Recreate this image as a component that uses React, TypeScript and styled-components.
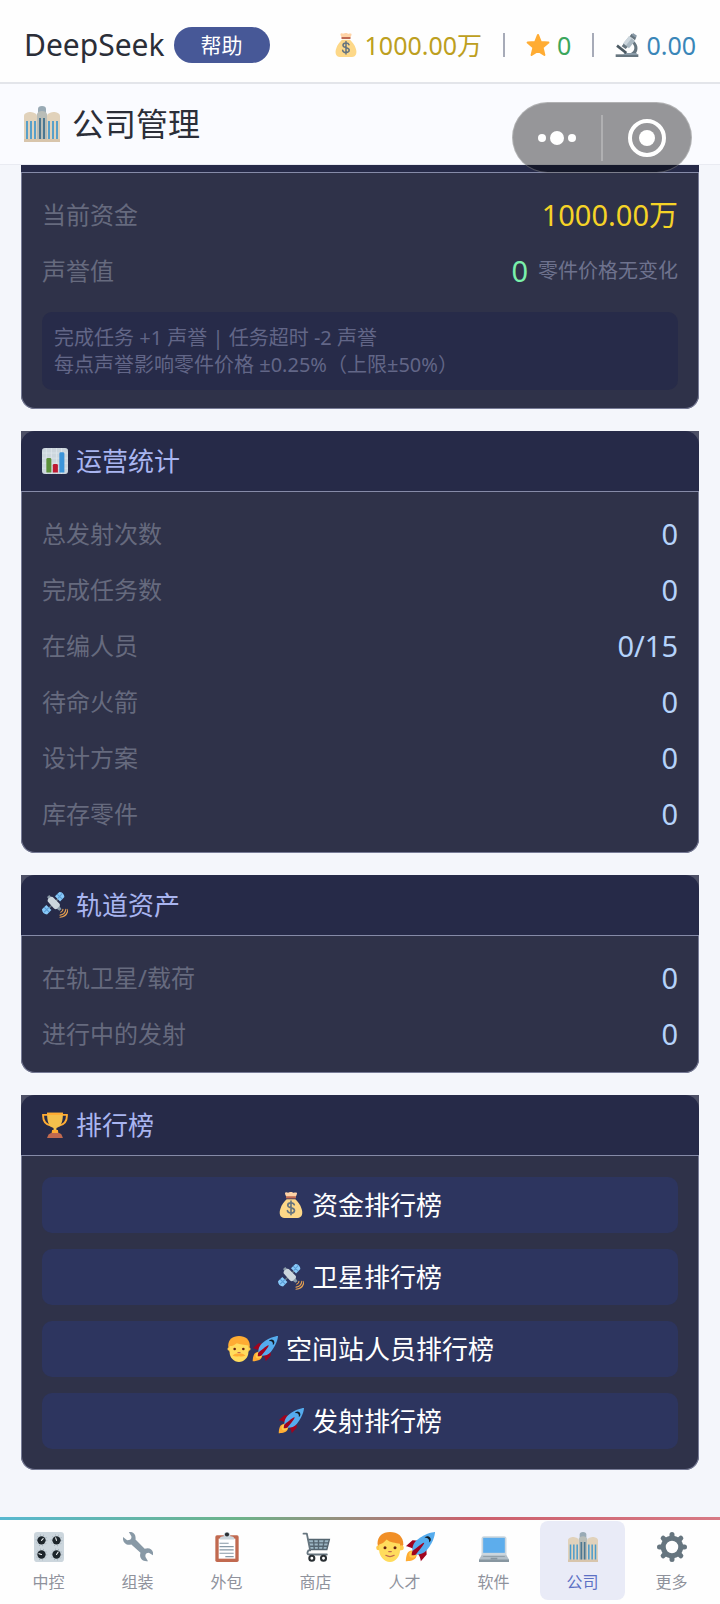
import { useState } from 'react';
import type { ReactNode } from 'react';
import styled, { createGlobalStyle } from 'styled-components';

const GlobalStyle = createGlobalStyle`
  * {
    box-sizing: border-box;
  }

  body {
    margin: 0;
    background: #f4f6fb;
    font-family: 'Noto Sans', 'Noto Sans CJK SC', sans-serif;
    color: #2b2e38;
  }

  button {
    border: 0;
    padding: 0;
    background: none;
    font-family: inherit;
    cursor: pointer;
  }
`;

const Page = styled.div`
  position: relative;
  display: flex;
  flex-direction: column;
  min-height: 100vh;
`;

const TopBar = styled.header`
  display: flex;
  align-items: center;
  justify-content: space-between;
  height: 84px;
  padding: 8px 24px 0;
  background: #fefefe;
  border-bottom: 2px solid #e3e5ea;
`;

const Brand = styled.div`
  display: flex;
  align-items: center;
  gap: 9px;
`;

const BrandName = styled.span`
  font-size: 30px;
  line-height: 36px;
`;

const HelpButton = styled.button`
  width: 96px;
  height: 36px;
  border-radius: 18px;
  background: #475897;
  color: #fff;
  font-size: 21px;
  line-height: 36px;
`;

const Resources = styled.div`
  display: flex;
  align-items: center;
  gap: 21px;
`;

const Resource = styled.span<{ $color: string }>`
  display: flex;
  align-items: center;
  gap: 7px;
  color: ${({ $color }) => $color};
  font-size: 25px;
  line-height: 36px;
`;

const Divider = styled.span`
  width: 2px;
  height: 24px;
  background: #a7abb8;
`;

const TitleBar = styled.div`
  display: flex;
  align-items: center;
  gap: 12px;
  height: 81px;
  padding: 0 24px;
  background: #fafbff;
  border-bottom: 1px solid #e9ebf2;
`;

const PageTitle = styled.h1`
  margin: 0;
  font-size: 32px;
  font-weight: 400;
  line-height: 40px;
`;

const Capsule = styled.div`
  position: absolute;
  top: 102px;
  right: 28px;
  display: flex;
  align-items: center;
  width: 180px;
  height: 71px;
  border: 1px solid rgba(255, 255, 255, 0.25);
  border-radius: 36px;
  background: rgba(0, 0, 0, 0.4);
`;

const CapsuleButton = styled.button`
  display: flex;
  flex: 1;
  align-items: center;
  justify-content: center;
  height: 46px;

  & + & {
    border-left: 2px solid rgba(255, 255, 255, 0.25);
  }
`;

const Content = styled.main`
  display: flex;
  flex-direction: column;
  gap: 22px;
  padding: 0 21px 47px;
`;

const CardBox = styled.section`
  border-radius: 0 0 14px 14px;
  background: #4d5066;
`;

const CardHeader = styled.div<{ $scrolled?: boolean }>`
  display: flex;
  align-items: center;
  gap: 8px;
  height: ${({ $scrolled }) => ($scrolled ? '8px' : '61px')};
  padding: 0 21px;
  border-bottom: 1px solid #868ba8;
  border-radius: ${({ $scrolled }) => ($scrolled ? '0' : '14px 14px 0 0')};
  background: #262a48;
`;

const CardTitle = styled.h2`
  margin: 0;
  color: #a9b5f0;
  font-size: 26px;
  font-weight: 400;
  line-height: 36px;
`;

const CardBody = styled.div`
  padding: 14px 20px 10px;
  border: 1px solid #777b96;
  border-top: 0;
  border-radius: 0 0 14px 14px;
  background: #2f3249;
`;

const StatList = styled.dl`
  margin: 0;
`;

const StatRow = styled.div`
  display: flex;
  align-items: center;
  justify-content: space-between;
  height: 56px;
`;

const StatLabel = styled.dt`
  color: #666a7e;
  font-size: 24px;
  line-height: 36px;
`;

const StatValue = styled.dd<{ $color?: string }>`
  display: flex;
  align-items: center;
  gap: 10px;
  margin: 0;
  color: ${({ $color }) => $color || '#b5d3fb'};
  font-size: 29px;
  line-height: 36px;
`;

const StatHint = styled.span`
  color: #6e728e;
  font-size: 20px;
`;

const Note = styled.p`
  margin: 13px 0 8px;
  padding: 12px;
  border-radius: 10px;
  background: #272b49;
  color: #626687;
  font-size: 20px;
  line-height: 27px;
`;

const RankList = styled.div`
  display: flex;
  flex-direction: column;
  gap: 16px;
  padding: 7px 0 10px;
`;

const RankButton = styled.button`
  display: flex;
  align-items: center;
  justify-content: center;
  gap: 8px;
  height: 56px;
  border-radius: 10px;
  background: #2d355f;
  color: #fff;
  font-size: 26px;
  line-height: 36px;
`;

const IconGroup = styled.span`
  display: flex;
`;

const TabBar = styled.nav`
  display: flex;
  margin-top: auto;
  padding: 1px 4px 4px;
  border-top: 3px solid;
  border-image: linear-gradient(90deg, #58b8d0, #6cb38a 33%, #cc5f6c 66%, #d77a85) 1;
  background: #fefefe;
`;

const Tab = styled.button<{ $active: boolean }>`
  display: flex;
  flex: 1;
  flex-direction: column;
  align-items: center;
  gap: 8px;
  height: 79px;
  margin: 0 2px;
  padding-top: 11px;
  border-radius: 8px;
  background: ${({ $active }) => ($active ? '#e9ebf7' : 'transparent')};
  color: ${({ $active }) => ($active ? '#5c70c4' : '#8f929c')};
  font-size: 16px;
  line-height: 24px;
`;

const Icon = styled.svg<{ $size: number }>`
  display: block;
  flex: none;
  width: ${({ $size }) => $size}px;
  height: ${({ $size }) => $size}px;
`;

const icons: Record<string, ReactNode> = {
  money: (
    <>
      <path fill="#FDD888" d="M32.500 22.900c-1.200-5.900-5.600-9.600-8.500-12.900H12c-2.900 3.300-7.300 7-8.500 12.900C1 29 2.500 36 9 36h18c6.500 0 8-7 5.500-13.100z" />
      <path fill="#FFD3A6" d="M10 1c2-1.500 3 .5 5-.3s3.500-.8 5.500 0S24 0 26 1c1.200.8-1 5-2 6.500H12.500C11 6 8.800 1.900 10 1z" />
      <path fill="#BF6952" d="M11 7.500c0-.8.600-1.500 1.500-1.500h11c.9 0 1.500.7 1.500 1.500S24.400 9 23.500 9h-11C11.600 9 11 8.300 11 7.500z" />
      <path fill="none" stroke="#67757F" strokeWidth="2.300" strokeLinecap="round" d="M22.500 17.700c-.6-1.900-2.400-2.700-4.500-2.700-2.500 0-4.500 1.300-4.500 3.400 0 4.800 9.300 2.400 9.300 7.200 0 2.300-2.200 3.600-4.800 3.600s-4.600-1.100-5-3.300M18 12.700v18.800" />
    </>
  ),
  star: (
    <path fill="#FFAC33" stroke="#FFAC33" strokeWidth="3" strokeLinejoin="round" d="M18 3l4.300 10.600 11.300.8-8.700 7.400 2.700 11.200L18 26.900 8.400 33l2.700-11.200-8.700-7.400 11.300-.8z" />
  ),
  microscope: (
    <>
      <path fill="#66757F" d="M1 32h34v4H1z" />
      <path fill="#66757F" d="M24 30c6-3 7-11 1-15l3-3c8 6 7 16 1 21h-7z" />
      <path fill="#8899A6" d="M14 30h18l2 3H12z" />
      <path fill="#AAB8C2" d="M21 5l9 7-9 11-9-7z" />
      <path fill="#CCD6DD" d="M21 5l4 3-9 11-4-3z" />
      <path fill="#66757F" d="M25 1l7 5-2 5-8-6zM13 16l6 5-3 3-6-4z" />
      <path fill="#8899A6" d="M27 0l6 4-2 3-6-4z" />
      <path stroke="#4B5962" strokeWidth="4" d="M3 19l14 11" />
    </>
  ),
  building: (
    <>
      <path fill="#99AAB5" d="M14 3q0-3 4-3t4 3v4h-8z" />
      <path fill="#B9BDB8" d="M13 8q1-3 5-3t5 3v28H13z" />
      <path fill="#E1D2BB" d="M0 10c0-3 4-4 6-4s7 1 7 4v26H0zM23 10c0-3 5-4 7-4s6 1 6 4v26H23z" />
      <path fill="#D8C5AC" d="M0 33h36v3H0z" />
      <path stroke="#4A9BCB" strokeWidth="1.800" d="M3 15v18M7 15v18M11 15v18M25 15v18M29 15v18M33 15v18" />
      <path stroke="#4C7790" strokeWidth="2" d="M16 12v21M20 12v21" />
    </>
  ),
  chart: (
    <>
      <rect width="36" height="36" rx="4" fill="#CCD6DD" />
      <path stroke="#E1E8ED" strokeWidth="1" d="M6 0v36M13 0v36M20 0v36M27 0v36M0 7h36M0 14h36M0 21h36M0 28h36" />
      <path fill="#5C913B" d="M6 34V16q0-2 2-2h3q2 0 2 2v18z" />
      <path fill="#BE1931" d="M15 34V24q0-2 2-2h3q2 0 2 2v10z" />
      <path fill="#3B94D9" d="M24 34V8q0-2 2-2h3q2 0 2 2v26z" />
    </>
  ),
  satellite: (
    <>
      <path stroke="#66757F" strokeWidth="2" d="M6 26L27 5" />
      <path fill="#88C9F9" d="M18 6l6-6q3 0 5 2t2 5l-6 6zM0 24l6-6 7 7-6 6q-3 0-5-2t-2-5z" />
      <path stroke="#5C9DD5" strokeWidth="1.500" d="M21 3l7 7M22 9l6-7M3 21l7 7M3 28l7-7" />
      <path fill="#8899A6" d="M7 7l3-3 5 5-4 4zM20 23l4-4 3 5-3 2z" />
      <path fill="#CCD6DD" d="M8 13q-1-2 1-4l3-2q2-1 4 1l8 8q2 2 0 4l-3 3q-2 2-5-1z" />
      <path fill="none" stroke="#E6A051" strokeWidth="1.600" strokeLinecap="round" d="M26 28q3-1 3-4M25 32q7-1 8-8M25 35q10-1 11-11" />
    </>
  ),
  trophy: (
    <>
      <path fill="none" stroke="#FFAC33" strokeWidth="2.600" d="M8 4H1.500Q1 17 13 19M28 4h6.500Q35 17 23 19" />
      <path fill="#F4C04C" d="M7 1h22c0 12-2 19-9 21v8h-4v-8C9 20 7 13 7 1z" />
      <path fill="#FFAC33" d="M7 1h22v3H7zM14 25h8l1 6H13z" />
      <path fill="#C1694F" d="M9 31q3-2 5-2h8q3 0 5 2l2 5H7z" />
    </>
  ),
  person: (
    <>
      <path fill="#F18F26" d="M3 14C3 5 9 0 18 0s16 5 16 15l-3 7H5z" />
      <circle cx="4.500" cy="19" r="3" fill="#FFCB4C" />
      <circle cx="31.500" cy="19" r="3" fill="#FFCB4C" />
      <path fill="#FFDC5D" d="M5 15c5-1 7-4 9-6 4 4 11 4 16 5v8c0 7-5 14-12 14S5 29 5 22z" />
      <circle cx="12" cy="19" r="1.800" fill="#662113" />
      <circle cx="24" cy="19" r="1.800" fill="#662113" />
      <path fill="none" stroke="#C1694F" strokeWidth="1.500" strokeLinecap="round" d="M16.500 23.500h3M13 28q5 3 10 0" />
    </>
  ),
  astronaut: (
    <>
      <path fill="#FFAC33" d="M3 14C3 5 9 0 18 0s15 5 15 14l-2 8H5z" />
      <circle cx="4.500" cy="18" r="2.500" fill="#FFCB4C" />
      <circle cx="31.500" cy="18" r="2.500" fill="#FFCB4C" />
      <path fill="#FFDC5D" d="M5 14c5 0 7-2 10-4 4 2 10 2 16 3v10c0 7-6 13-13 13S5 30 5 23z" />
      <circle cx="12" cy="18" r="1.800" fill="#662113" />
      <circle cx="24" cy="18" r="1.800" fill="#662113" />
      <path fill="#FFAC33" d="M9 27q5-4 9-2 4-2 9 2-4 2-9 1-5 1-9-1z" />
      <path stroke="#C1694F" strokeWidth="1.500" strokeLinecap="round" d="M16.500 23h3" />
    </>
  ),
  rocket: (
    <>
      <path fill="#A0041E" d="M1 17l8-7 16 1 1 16-7 8s0-6-6-12-12-6-12-6z" />
      <path fill="#FFAC33" d="M1 35s0-8 3-11 11-2.800 11-2.800S15 29 12 32 1 35 1 35z" />
      <circle cx="9" cy="27" r="4" fill="#FFCC4D" />
      <path fill="#55ACEE" d="M36 0S26 0 14 10c-6 5-6 14-4 16s11 2 16-4C36 10 36 0 36 0z" />
      <path fill="#121b25" d="M27 5c-1.600 0-3 1-3.600 2.400.5-.3 1-.4 1.600-.4 2.200 0 4 1.800 4 4 0 .6-.1 1.100-.4 1.600C30 12 31 10.600 31 9c0-2.200-1.800-4-4-4z" />
      <path fill="#A0041E" d="M8 28s0-4 1-5 13-11 14-10-9 13-10 14-5 1-5 1z" />
    </>
  ),
  knobs: (
    <>
      <rect width="36" height="36" rx="4" fill="#CCD6DD" />
      <g fill="none" stroke="#8899A6" strokeWidth="1" strokeDasharray="1 3">
        <circle cx="9" cy="10" r="6.500" />
        <circle cx="27" cy="10" r="6.500" />
        <circle cx="9" cy="27" r="6.500" />
        <circle cx="27" cy="27" r="6.500" />
      </g>
      <g fill="#1d252b">
        <circle cx="9" cy="10" r="5" />
        <circle cx="27" cy="10" r="5" />
        <circle cx="9" cy="27" r="5" />
        <circle cx="27" cy="27" r="5" />
      </g>
      <path stroke="#F5F8FA" strokeWidth="1.300" strokeLinecap="round" d="M9 10l2-2M27 10l-1-3M9 27l-3-1M27 27l2-3" />
    </>
  ),
  wrench: (
    <path fill="#8899A6" d="M7 0c5-1 9 3 8 9l11 11c6-2 11 1 10 8l-5-3q-5 0-4 5l3 5c-7 1-11-4-9-10L10 15C4 17-1 12 0 6l5 4q6 0 5-5z" />
  ),
  clipboard: (
    <>
      <rect x="4" y="4" width="28" height="32" rx="2" fill="#C1694F" />
      <path fill="#fff" d="M8 8h20v24H8z" />
      <path fill="#CCD6DD" d="M9 9q0-4 5-4 0-5 4-5t4 5q5 0 5 4z" />
      <circle cx="18" cy="3" r="2.500" fill="#292F33" />
      <path stroke="#8899A6" strokeWidth="1.400" d="M9 13.500h11M9 17.500h17M9 21.500h17M9 25.500h17M16 29.500h10" />
    </>
  ),
  cart: (
    <>
      <path fill="#9DB7C5" d="M9 9h24l-2 12H11z" />
      <path fill="none" stroke="#546570" strokeWidth="1.700" d="M8 9h26l-3 12H10M15 9l1 12M21 9v12M28 9l-2 12M9 13h24M10 17h22" />
      <path fill="none" stroke="#66757F" strokeWidth="2.200" strokeLinecap="round" strokeLinejoin="round" d="M3 2h4l4 20H9q-3 5 1 5h21" />
      <circle cx="13" cy="31.500" r="3" fill="#fff" stroke="#292F33" strokeWidth="2.500" />
      <circle cx="27" cy="31.500" r="3" fill="#fff" stroke="#292F33" strokeWidth="2.500" />
    </>
  ),
  laptop: (
    <>
      <path fill="#CCD6DD" d="M3 8q0-3 3-3h24q3 0 3 3v21H3z" />
      <path fill="#5DADEC" d="M5 7h26v18H5z" />
      <path fill="#B3BFC8" d="M3 28h30l3 5v3H0v-3z" />
      <path fill="#8796A0" d="M0 33h36v3H0z" />
      <path fill="#8796A0" d="M5 29h26v1H5zM14 31h8v2h-8z" />
    </>
  ),
  gear: (
    <>
      <circle cx="18" cy="18" r="10.500" fill="none" stroke="#66757F" strokeWidth="6" />
      <path stroke="#66757F" strokeWidth="6" strokeLinecap="round" d="M18 3v3M18 30v3M3 18h3M30 18h3M7.400 7.400l2 2M26.600 26.600l2 2M7.400 28.600l2-2M26.600 9.400l2-2" />
    </>
  ),
};

function Emoji({ name, size }: { name: string; size: number }) {
  return (
    <Icon viewBox="0 0 36 36" $size={size} aria-hidden="true">
      {icons[name]}
    </Icon>
  );
}

interface Stat {
  label: string;
  value: string;
}

interface CardProps {
  icon: string;
  title: string;
  children: ReactNode;
}

const operationStats: Stat[] = [
  { label: '总发射次数', value: '0' },
  { label: '完成任务数', value: '0' },
  { label: '在编人员', value: '0/15' },
  { label: '待命火箭', value: '0' },
  { label: '设计方案', value: '0' },
  { label: '库存零件', value: '0' },
];

const orbitStats: Stat[] = [
  { label: '在轨卫星/载荷', value: '0' },
  { label: '进行中的发射', value: '0' },
];

const rankings = [
  { icons: ['money'], label: '资金排行榜' },
  { icons: ['satellite'], label: '卫星排行榜' },
  { icons: ['astronaut', 'rocket'], label: '空间站人员排行榜' },
  { icons: ['rocket'], label: '发射排行榜' },
];

const tabs = [
  { icons: ['knobs'], label: '中控' },
  { icons: ['wrench'], label: '组装' },
  { icons: ['clipboard'], label: '外包' },
  { icons: ['cart'], label: '商店' },
  { icons: ['person', 'rocket'], label: '人才' },
  { icons: ['laptop'], label: '软件' },
  { icons: ['building'], label: '公司' },
  { icons: ['gear'], label: '更多' },
];

function Card({ icon, title, children }: CardProps) {
  return (
    <CardBox>
      <CardHeader>
        <Emoji name={icon} size={26} />
        <CardTitle>{title}</CardTitle>
      </CardHeader>
      <CardBody>{children}</CardBody>
    </CardBox>
  );
}

function Stats({ items }: { items: Stat[] }) {
  return (
    <StatList>
      {items.map((item) => (
        <StatRow key={item.label}>
          <StatLabel>{item.label}</StatLabel>
          <StatValue>{item.value}</StatValue>
        </StatRow>
      ))}
    </StatList>
  );
}

function App() {
  const [activeTab, setActiveTab] = useState<string>('公司');

  return (
    <>
      <GlobalStyle />
      <Page>
        <TopBar>
          <Brand>
            <BrandName>DeepSeek</BrandName>
            <HelpButton>帮助</HelpButton>
          </Brand>
          <Resources>
            <Resource $color="#bd9f20">
              <Emoji name="money" size={24} />
              1000.00万
            </Resource>
            <Divider />
            <Resource $color="#3ba65c">
              <Emoji name="star" size={24} />0
            </Resource>
            <Divider />
            <Resource $color="#3a86b8">
              <Emoji name="microscope" size={24} />
              0.00
            </Resource>
          </Resources>
        </TopBar>
        <TitleBar>
          <Emoji name="building" size={36} />
          <PageTitle>公司管理</PageTitle>
        </TitleBar>
        <Content>
          <CardBox>
            <CardHeader $scrolled />
            <CardBody>
              <StatList>
                <StatRow>
                  <StatLabel>当前资金</StatLabel>
                  <StatValue $color="#f5d327">1000.00万</StatValue>
                </StatRow>
                <StatRow>
                  <StatLabel>声誉值</StatLabel>
                  <StatValue $color="#7af0aa">
                    0<StatHint>零件价格无变化</StatHint>
                  </StatValue>
                </StatRow>
              </StatList>
              <Note>
                完成任务 +1 声誉 | 任务超时 -2 声誉
                <br />
                每点声誉影响零件价格 ±0.25%（上限±50%）
              </Note>
            </CardBody>
          </CardBox>
          <Card icon="chart" title="运营统计">
            <Stats items={operationStats} />
          </Card>
          <Card icon="satellite" title="轨道资产">
            <Stats items={orbitStats} />
          </Card>
          <Card icon="trophy" title="排行榜">
            <RankList>
              {rankings.map((rank) => (
                <RankButton key={rank.label}>
                  <IconGroup>
                    {rank.icons.map((name) => (
                      <Emoji key={name} name={name} size={26} />
                    ))}
                  </IconGroup>
                  {rank.label}
                </RankButton>
              ))}
            </RankList>
          </Card>
        </Content>
        <TabBar>
          {tabs.map((tab) => (
            <Tab
              key={tab.label}
              $active={tab.label === activeTab}
              onClick={() => setActiveTab(tab.label)}
            >
              <IconGroup>
                {tab.icons.map((name) => (
                  <Emoji key={name} name={name} size={30} />
                ))}
              </IconGroup>
              {tab.label}
            </Tab>
          ))}
        </TabBar>
        <Capsule>
          <CapsuleButton aria-label="更多">
            <svg width="40" height="16" viewBox="0 0 40 16" fill="#fff">
              <circle cx="5" cy="8" r="4" />
              <circle cx="20" cy="8" r="7" />
              <circle cx="35" cy="8" r="4" />
            </svg>
          </CapsuleButton>
          <CapsuleButton aria-label="关闭">
            <svg width="38" height="38" viewBox="0 0 38 38">
              <circle cx="19" cy="19" r="17" fill="none" stroke="#fff" strokeWidth="4" />
              <circle cx="19" cy="19" r="8" fill="#fff" />
            </svg>
          </CapsuleButton>
        </Capsule>
      </Page>
    </>
  );
}

export default App;
